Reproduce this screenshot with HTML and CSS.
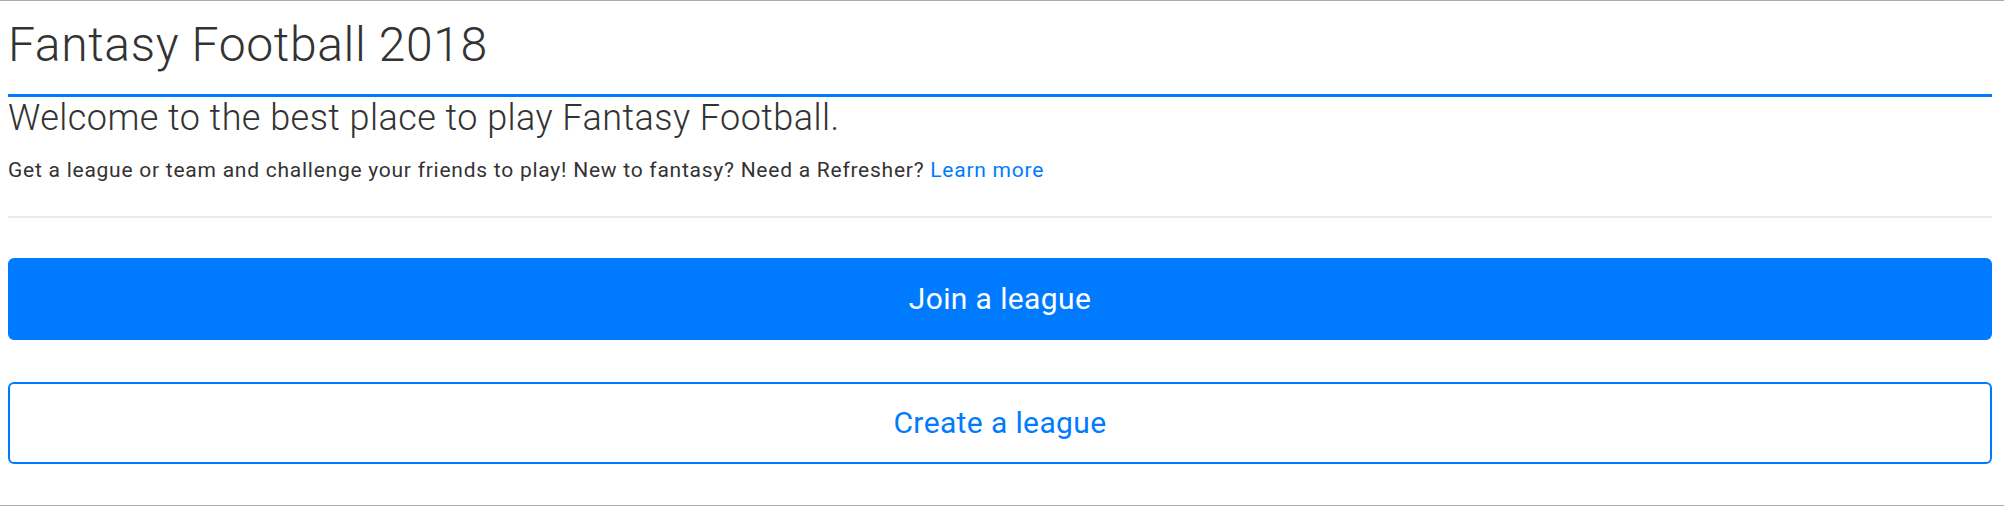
FILE: index.html
```html
<!DOCTYPE html>
<html>
<head>
<meta charset="utf-8">
<link rel="stylesheet" href="styles.css">
</head>
<body>
<div class="page">
  <h1 class="title">Fantasy Football 2018</h1>
  <p class="welcome">Welcome to the best place to play Fantasy Football.</p>
  <p class="intro">Get a league or team and challenge your friends to play! New to fantasy? Need a Refresher? <a class="link" href="#">Learn more</a></p>
  <hr class="divider">
  <div class="actions">
    <a class="btn btn-primary" href="#">Join a league</a>
    <a class="btn btn-outline" href="#">Create a league</a>
  </div>
</div>
</body>
</html>
```

FILE: styles.css
```css
html, body {
  margin: 0;
  padding: 0;
  background: #fff;
}

body {
  font-family: Roboto, "Liberation Sans", sans-serif;
  color: #333;
}

.page {
  box-sizing: border-box;
  height: 506px;
  border-top: 1px solid #aaa;
  border-bottom: 1px solid #aaa;
  padding: 0 12px 0 8px;
}

.title {
  margin: 15px 0 0;
  padding: 0 0 20px 0;
  font-size: 48px;
  line-height: 58px;
  font-weight: 300;
  letter-spacing: 0.65px;
  color: #333;
  border-bottom: 3px solid #007bff;
}

.welcome {
  margin: 0;
  font-size: 36px;
  line-height: 42px;
  font-weight: 300;
  letter-spacing: 0.45px;
  color: #333;
}

.intro {
  margin: 19px 0 0;
  font-size: 21px;
  line-height: 24px;
  font-weight: 400;
  letter-spacing: 0.75px;
  color: #333;
}

.link {
  color: #007bff;
  text-decoration: none;
}

.divider {
  margin: 34px 0 0;
  border: 0;
  border-top: 2px solid #ebebeb;
  height: 0;
}

.actions {
  margin-top: 40px;
  display: flex;
  flex-direction: column;
  gap: 42px;
}

.btn {
  box-sizing: border-box;
  display: flex;
  align-items: center;
  justify-content: center;
  height: 82px;
  border-radius: 6px;
  font-size: 30px;
  line-height: 36px;
  font-weight: 400;
  letter-spacing: 0.38px;
  text-decoration: none;
}

.btn-primary {
  background: #007bff;
  color: #fff;
  border: 2px solid #007bff;
}

.btn-outline {
  background: #fff;
  color: #007bff;
  border: 2px solid #007bff;
}
```
